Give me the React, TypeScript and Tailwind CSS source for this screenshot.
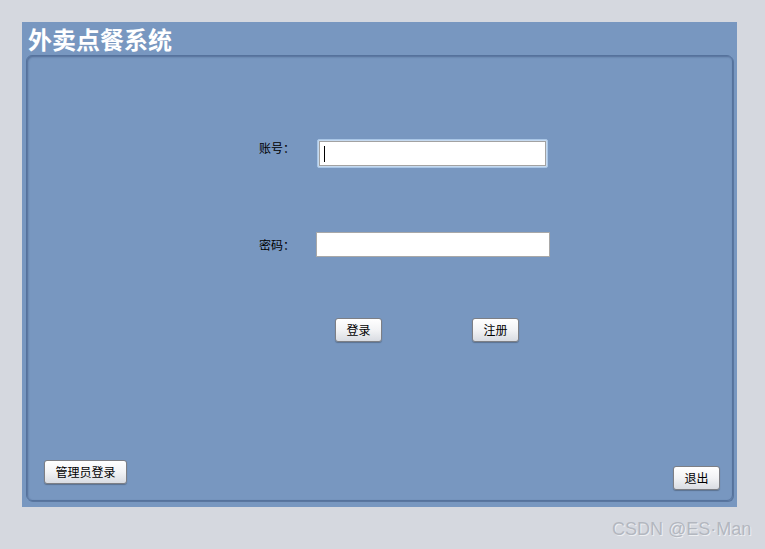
const cjk = { fontFamily: '"Noto Sans CJK SC", "Noto Sans", sans-serif' };

function Btn({ label, className }: { label: string; className?: string }) {
  return (
    <button
      className={
        'flex h-[24px] items-center justify-center rounded-[3px] border border-[#7d7f85] bg-gradient-to-b from-[#ffffff] via-[#f2f3f5] to-[#d9dce2] text-[12px] text-black shadow-[0_1px_1px_rgba(0,0,0,0.25)] ' +
        (className ?? '')
      }
      style={cjk}
    >
      {label}
    </button>
  );
}

export default function App() {
  return (
    <div className="relative h-[549px] w-[765px] bg-[#d5d8df]" style={cjk}>
      <div className="absolute left-[22px] top-[22px] flex h-[485px] w-[715px] flex-col bg-[#7897c0]">
        {/* Title */}
        <div className="h-[33px] pl-[6px] pt-[2px] text-[24px] font-bold leading-[30px] text-white">
          外卖点餐系统
        </div>

        {/* Inner panel */}
        <div className="mx-[4px] flex h-[446px] flex-col rounded-[6px] border border-[#55729c] shadow-[inset_1px_1px_2px_rgba(40,60,100,0.45),1px_1px_0_rgba(60,85,125,0.5)]">
          <div className="flex flex-col pl-[232px] pt-[83px]">
            {/* account row */}
            <div className="flex items-start">
              <span className="w-[58px] pt-[2px] text-[12px] leading-[14px] text-black">账号：</span>
              <div className="h-[29px] w-[231px] rounded-[2px] border border-[#a9c6e6] bg-[#c6daf0] p-[1px]">
                <div className="flex h-full w-full items-center border border-[#a2a2a2] bg-white pl-[4px]">
                  <div className="h-[16px] w-[1px] bg-black" />
                </div>
              </div>
            </div>

            {/* password row */}
            <div className="mt-[64px] flex items-center">
              <span className="w-[57px] text-[12px] leading-[14px] text-black">密码：</span>
              <div className="h-[25px] w-[234px] border border-[#a8a8a8] bg-white" />
            </div>

            {/* buttons */}
            <div className="mt-[61px] flex pl-[76px]">
              <Btn label="登录" className="w-[47px]" />
              <Btn label="注册" className="ml-[90px] w-[47px]" />
            </div>
          </div>

          <div className="mt-auto flex items-end justify-between pb-[10px] pl-[17px] pr-[12px]">
            <Btn label="管理员登录" className="mb-[6px] w-[83px]" />
            <Btn label="退出" className="w-[47px]" />
          </div>
        </div>
      </div>

      <div
        className="absolute left-[612px] top-[518px] text-[18px] leading-[22px] text-[#b3b7bf] [text-shadow:1px_1px_0_rgba(255,255,255,0.6)]"
        style={{ fontFamily: '"Liberation Sans", Arial, sans-serif' }}
      >
        CSDN @ES·Man
      </div>
    </div>
  );
}
